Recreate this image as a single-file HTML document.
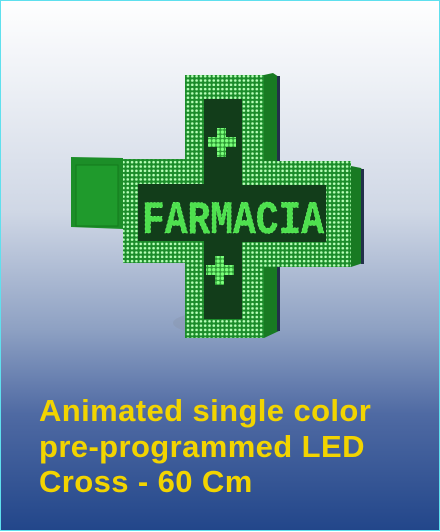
<!DOCTYPE html>
<html><head><meta charset="utf-8"><style>
html,body{margin:0;padding:0}
body{width:440px;height:531px;overflow:hidden;position:relative;background:linear-gradient(180deg,#ffffff 0%,#eef1f6 15%,#cfd7e5 40%,#8ea1c3 62%,#4f6aa3 78%,#22468a 100%);box-sizing:border-box;border:1.5px solid #5fe0ee;}
svg{position:absolute;left:0;top:0}
.t{position:absolute;left:38px;top:392px;font-family:"Liberation Sans",sans-serif;font-weight:bold;font-size:31px;line-height:35.5px;color:#f2d400;letter-spacing:0.4px;white-space:nowrap}
</style></head><body>
<svg width="440" height="531" viewBox="0 0 440 531">
<defs>
<pattern id="d" width="4.3" height="4.3" patternUnits="userSpaceOnUse"><rect width="4.3" height="4.3" fill="#1b8c2a"/><circle cx="2.1" cy="2.1" r="1.3" fill="#b8ffb8"/></pattern>
<pattern id="b" width="4.3" height="4.3" patternUnits="userSpaceOnUse"><rect width="4.3" height="4.3" fill="#2a9a32"/><circle cx="2.1" cy="2.1" r="1.7" fill="#7dff7d"/></pattern>
</defs>
<ellipse cx="222" cy="322" rx="50" ry="12" fill="#8793ab" opacity=".4"/>
<polygon points="263,74 272,72 278,76 278,330 263,337" fill="#187a22"/>
<polygon points="350,165 360,167 362,170 362,262 350,266" fill="#187a22"/>
<rect x="276" y="75" width="3" height="255" fill="#23304a"/>
<rect x="360" y="168" width="3" height="95" fill="#23304a"/>
<polygon points="70,156 122,157 122,228 70,226" fill="#1c8e28"/>
<rect x="75" y="164" width="42" height="61" fill="#1f9a2c" stroke="#137a1d" stroke-width="1"/>
<path d="M184,74 H263 V160 H350 V266 H263 V337 H184 V262 H122 V158 H184 Z" fill="url(#d)"/>
<path d="M203,98 H241 V184 H325 V241 H241 V318 H203 V240 H137 V183 H203 Z" fill="#123d1a"/>
<g fill="url(#b)">
<rect x="216" y="127" width="9" height="29"/><rect x="207" y="136" width="28" height="10"/>
<rect x="214" y="255" width="9" height="29"/><rect x="205" y="264" width="28" height="10"/>
</g>
<text x="141" y="232" font-family="Liberation Mono,monospace" font-size="46" font-weight="bold" textLength="182" lengthAdjust="spacingAndGlyphs" fill="#4ee04e" stroke="#6dff6d" stroke-width="0.6" stroke-dasharray="2.2 2">FARMACIA</text>
</svg>
<div class="t">Animated single color<br>pre-programmed LED<br>Cross - 60 Cm</div>
</body></html>
